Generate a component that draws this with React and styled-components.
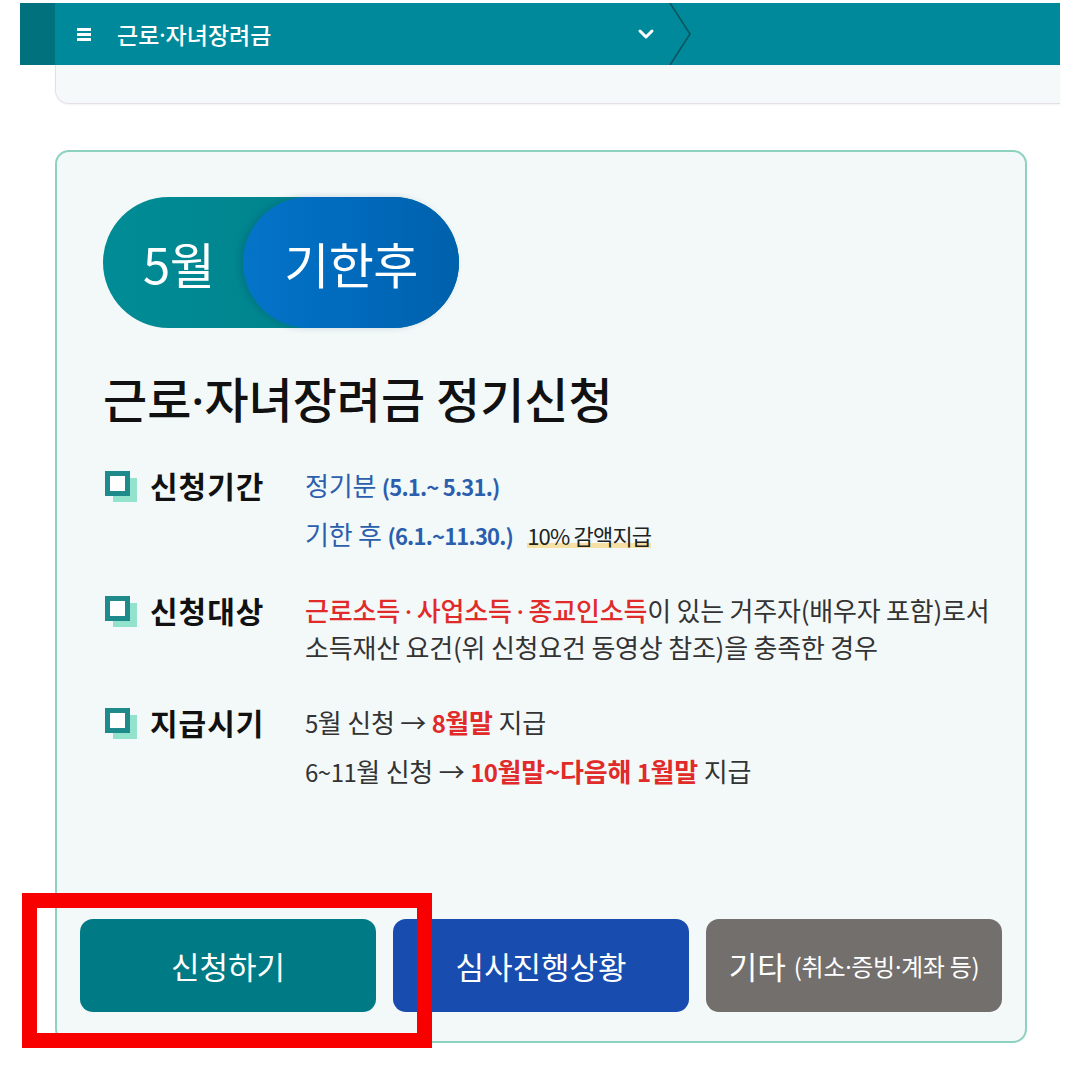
import React from "react";
import styled, { createGlobalStyle } from "styled-components";

const Global = createGlobalStyle`
  html, body { margin: 0; padding: 0; background: #ffffff; }
  body { font-family: "Noto Sans CJK KR", "Noto Sans", sans-serif; color: #222; }
  *, *::before, *::after { box-sizing: border-box; }
`;

const Page = styled.div`
  position: relative;
  width: 1080px;
  height: 1080px;
  overflow: hidden;
  padding: 3px 20px 0 20px;
`;

const Dot = styled.span`
  font-family: "Noto Sans", "Liberation Sans", sans-serif;
  margin: 0 ${(p) => p.$space || "0px"};
`;

const TopBar = styled.div`
  display: flex;
  align-items: center;
  height: 62px;
  width: 1040px;
  background: #00899a;
  color: #fff;
`;

const DarkStrip = styled.div`
  width: 35px;
  height: 100%;
  background: #00717d;
`;

const Menu = styled.div`
  display: flex;
  align-items: center;
  width: 613px;
  height: 100%;
  padding-left: 22px;
`;

const Burger = styled.span`
  display: flex;
  flex-direction: column;
  justify-content: space-between;
  width: 14px;
  height: 13px;
  & > i { display: block; height: 3px; background: #fff; }
`;

const MenuTitle = styled.span`
  margin-left: 26px;
  font-size: 23px;
  font-weight: 500;
  letter-spacing: 0;
  flex: 1;
`;

const Chevron = styled.svg`
  width: 20px;
  height: 14px;
  margin-right: 12px;
`;

const Divider = styled.svg`
  width: 24px;
  height: 62px;
  display: block;
`;

const PrevCard = styled.div`
  margin-left: 35px;
  width: 1005px;
  height: 39px;
  background: #f5f9fa;
  border: 1px solid #e5e0e8;
  border-top: none;
  border-right: none;
  border-bottom-left-radius: 14px;
  box-shadow: 0 1px 2px rgba(0, 0, 0, 0.05);
`;

const Card = styled.section`
  display: flex;
  flex-direction: column;
  margin: 46px 0 0 35px;
  width: 972px;
  height: 893px;
  border: 2px solid #8dd2bf;
  border-radius: 14px;
  background: #f3f9f9;
  padding: 45px 0 0 0;
`;

const Pill = styled.div`
  display: flex;
  align-items: center;
  margin-left: 46px;
  width: 356px;
  height: 131px;
  border-radius: 66px;
  background: linear-gradient(90deg, #008c96 0%, #00838c 60%, #007a84 100%);
  color: #fff;
  font-size: 49px;
  font-weight: 400;
  letter-spacing: -0.5px;
`;

const Month = styled.span`
  width: 140px;
  padding-left: 40px;
`;

const Active = styled.span`
  display: flex;
  align-items: center;
  justify-content: center;
  width: 216px;
  height: 100%;
  border-radius: 66px;
  background: linear-gradient(90deg, #0474c9 0%, #0068b9 60%, #0061ac 100%);
  box-shadow: -3px 0 6px rgba(0, 40, 80, 0.18);
`;

const Title = styled.h2`
  margin: 36px 0 0 46px;
  font-size: 48px;
  line-height: 66px;
  font-weight: 500;
  color: #111;
  letter-spacing: 0;
`;

const Rows = styled.div`
  display: flex;
  flex-direction: column;
  gap: 39px;
  margin: 34px 0 0 48px;
`;

const Row = styled.div`
  display: flex;
  align-items: flex-start;
`;

const Label = styled.div`
  display: flex;
  align-items: center;
  width: 200px;
  height: 36px;
  font-size: 30px;
  font-weight: 700;
  color: #111;
  letter-spacing: 1px;
`;

const BoxIcon = styled.span`
  position: relative;
  flex: none;
  width: 32px;
  height: 31px;
  margin-right: 13px;
  margin-top: 2px;
  &::before {
    content: "";
    position: absolute;
    left: 8px;
    top: 7px;
    width: 24px;
    height: 24px;
    background: #93e3cc;
  }
  &::after {
    content: "";
    position: absolute;
    left: 0;
    top: 0;
    width: 25px;
    height: 25px;
    border: 5px solid #1f8a8c;
    background: #fff;
  }
`;

const Values = styled.div`
  display: flex;
  flex-direction: column;
  gap: ${(p) => (p.$wrap ? "0px" : "12px")};
  font-size: 26px;
  line-height: 36px;
  color: #333;
  letter-spacing: -0.2px;
`;

const Line = styled.div`
  color: ${(p) => (p.$blue ? "#2b5fae" : "#333")};
  white-space: nowrap;
`;

const Strong = styled.b`
  font-weight: 700;
  font-size: 22px;
  letter-spacing: -0.8px;
`;

const Num = styled.span`
  font-size: 24px;
  letter-spacing: -0.5px;
`;

const Red = styled.span`
  color: #e12a2a;
  font-weight: ${(p) => (p.$bold ? 700 : 500)};
`;

const Highlight = styled.span`
  margin-left: 14px;
  font-size: 22px;
  color: #222;
  letter-spacing: -0.8px;
  background: linear-gradient(transparent 74%, #f7e0a3 74%, #f7e0a3 92%, transparent 92%);
`;

const Buttons = styled.div`
  display: flex;
  gap: 17px;
  margin: auto 0 29px 23px;
`;

const Button = styled.button`
  display: flex;
  align-items: center;
  justify-content: center;
  gap: 8px;
  width: 296px;
  height: 93px;
  border: none;
  border-radius: 13px;
  background: ${(p) => p.$bg};
  color: #fff;
  font-family: inherit;
  font-size: 31px;
  font-weight: 400;
  letter-spacing: 0;
  cursor: pointer;
`;

const Small = styled.span`
  font-size: 24px;
  letter-spacing: -0.3px;
`;

const Annotation = styled.div`
  position: absolute;
  left: 22px;
  top: 893px;
  width: 410px;
  height: 155px;
  border: 15px solid #f80000;
  pointer-events: none;
`;

export default function App() {
  return (
    <Page>
      <Global />
      <TopBar>
        <DarkStrip />
        <Menu>
          <Burger>
            <i />
            <i />
            <i />
          </Burger>
          <MenuTitle>
            근로<Dot>·</Dot>자녀장려금
          </MenuTitle>
          <Chevron viewBox="0 0 20 14">
            <polyline points="4,4 10,10 16,4" fill="none" stroke="#fff" strokeWidth="3" strokeLinecap="round" strokeLinejoin="round" />
          </Chevron>
        </Menu>
        <Divider viewBox="0 0 24 62">
          <polyline points="2,0 22,31 2,62" fill="none" stroke="#0b5560" strokeWidth="1.6" />
        </Divider>
      </TopBar>
      <PrevCard />
      <Card>
        <Pill>
          <Month>5월</Month>
          <Active>기한후</Active>
        </Pill>
        <Title>
          근로<Dot>·</Dot>자녀장려금 정기신청
        </Title>
        <Rows>
          <Row>
            <Label>
              <BoxIcon />
              신청기간
            </Label>
            <Values>
              <Line $blue>
                정기분 <Strong>(5.1.~ 5.31.)</Strong>
              </Line>
              <Line $blue>
                기한 후 <Strong>(6.1.~11.30.)</Strong>
                <Highlight>10% 감액지급</Highlight>
              </Line>
            </Values>
          </Row>
          <Row>
            <Label>
              <BoxIcon />
              신청대상
            </Label>
            <Values $wrap>
              <Line>
                <Red>
                  근로소득<Dot $space="5px">·</Dot>사업소득<Dot $space="5px">·</Dot>종교인소득
                </Red>
                이 있는 거주자(배우자 포함)로서
              </Line>
              <Line>소득재산 요건(위 신청요건 동영상 참조)을 충족한 경우</Line>
            </Values>
          </Row>
          <Row>
            <Label>
              <BoxIcon />
              지급시기
            </Label>
            <Values>
              <Line>
                <Num>5</Num>월 신청 → <Red $bold><Num>8</Num>월말</Red> 지급
              </Line>
              <Line>
                <Num>6~11</Num>월 신청 → <Red $bold><Num>10</Num>월말~다음해 <Num>1</Num>월말</Red> 지급
              </Line>
            </Values>
          </Row>
        </Rows>
        <Buttons>
          <Button $bg="#007b86">신청하기</Button>
          <Button $bg="#184caf">심사진행상황</Button>
          <Button $bg="#736f6d">
            기타
            <Small>
              (취소<Dot>·</Dot>증빙<Dot>·</Dot>계좌 등)
            </Small>
          </Button>
        </Buttons>
      </Card>
      <Annotation />
    </Page>
  );
}
